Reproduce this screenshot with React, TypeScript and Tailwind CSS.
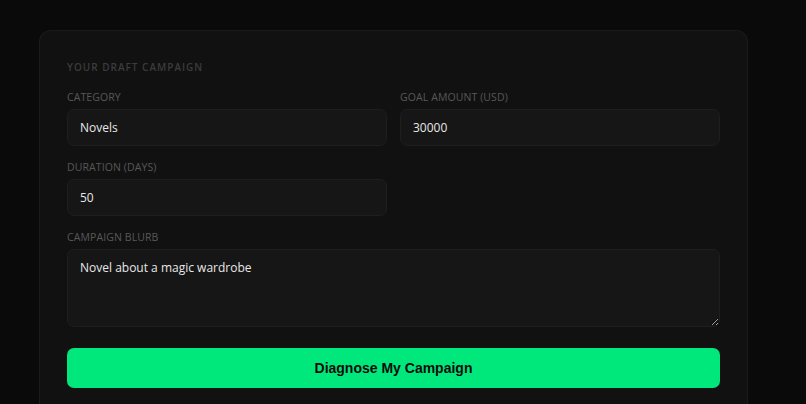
import React from "react";

const font = { fontFamily: '"Open Sans", "Noto Sans", sans-serif' };

function Field({ label, children }: { label: string; children: React.ReactNode }) {
  return (
    <div className="flex flex-col gap-[5px]">
      <label className="text-[10.5px] leading-[14px] font-medium uppercase tracking-[0.1px] text-[#585858]">
        {label}
      </label>
      {children}
    </div>
  );
}

const inputCls =
  "h-[37px] w-full rounded-[7px] border border-[#1e1e1e] bg-[#161616] px-3 text-[12px] text-[#e8e8e8] outline-none";

export default function App() {
  return (
    <div className="h-[404px] overflow-hidden bg-[#0a0a0a] pt-[30px] pl-[39px]" style={font}>
      <div className="w-[709px] h-[374px] rounded-t-[12px] border border-[#1b1b1b] border-b-0 bg-[#111111] px-[27px] pt-[29px]">
        <div className="text-[10px] leading-[14px] font-semibold uppercase tracking-[1px] text-[#3c3c3c]">
          Your Draft Campaign
        </div>
        <div className="mt-[16px] grid grid-cols-2 gap-x-[13px] gap-y-[14px]">
          <Field label="Category">
            <input className={inputCls} style={font} defaultValue="Novels" />
          </Field>
          <Field label="Goal Amount (USD)">
            <input className={inputCls} style={font} defaultValue="30000" />
          </Field>
          <Field label="Duration (days)">
            <input className={inputCls} style={font} defaultValue="50" />
          </Field>
          <div />
          <div className="col-span-2">
            <Field label="Campaign Blurb">
              <textarea
                className="h-[78px] w-full resize-y rounded-[7px] border border-[#1e1e1e] bg-[#161616] px-3 py-[9px] text-[12px] leading-[17px] text-[#e8e8e8] outline-none"
                style={font}
                defaultValue="Novel about a magic wardrobe"
              />
            </Field>
          </div>
        </div>
        <button
          className="mt-[21px] h-[40px] w-full rounded-[7px] bg-[#00e87c] text-[14px] font-bold text-[#0b0b0b]"
          style={{ fontFamily: '"Liberation Sans", Arial, sans-serif' }}
        >
          Diagnose My Campaign
        </button>
      </div>
    </div>
  );
}
